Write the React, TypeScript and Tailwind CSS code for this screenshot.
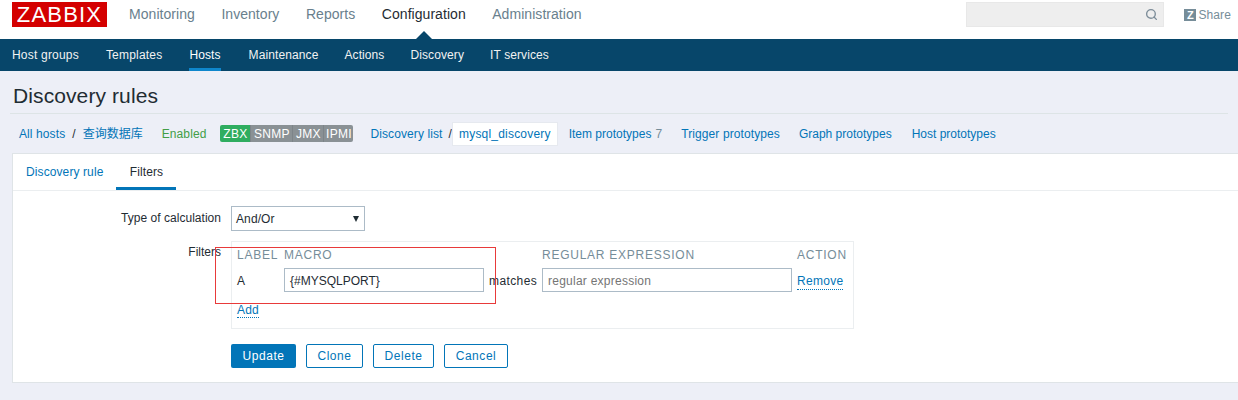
import React from "react";
import { Search } from "lucide-react";

const mainMenu = ["Monitoring", "Inventory", "Reports", "Configuration", "Administration"];
const subMenu = ["Host groups", "Templates", "Hosts", "Maintenance", "Actions", "Discovery", "IT services"];

const Th = ({ className, children }: { className: string; children: React.ReactNode }) => (
  <div className={`text-[12px] leading-[14px] tracking-[0.75px] text-[#768d99] ${className}`}>{children}</div>
);

const Btn = ({ children, className }: { children: React.ReactNode; className: string }) => (
  <button className={`h-[24px] rounded-[2px] border border-[#0275b8] bg-white text-[12px] tracking-[0.55px] text-[#0275b8] ${className}`}>
    {children}
  </button>
);

export default function App() {
  return (
    <div className="relative flex h-[400px] w-[1238px] flex-col overflow-hidden bg-[#edeff7] font-['Liberation_Sans','Noto_Sans_CJK_SC',sans-serif] text-[12px] text-[#1f2c33]">
      {/* top menu */}
      <div className="flex h-[39px] items-start bg-white">
        <div className="ml-[12px] mt-[2px] flex h-[25px] w-[95px] items-center justify-center bg-[#d40000] text-[22px] tracking-[1.2px] text-white">
          ZABBIX
        </div>
        <div className="ml-[22px] mt-[6px] flex gap-[26.5px] text-[14px] leading-[16px] tracking-[0.05px] text-[#69808d]">
          {mainMenu.map((m) => (
            <span key={m} className={m === "Configuration" ? "text-[#1f2c33]" : ""}>
              {m}
            </span>
          ))}
        </div>
        <div className="ml-auto mt-[2px] flex h-[25px] w-[198px] items-center justify-end border border-[#e8e8e8] bg-[#eeeeee] pr-[5px]">
          <Search size={13} strokeWidth={2.5} className="text-[#7d8d99]" />
        </div>
        <div className="ml-[20px] mr-[7px] mt-[8px] flex items-center gap-[2px] text-[12px] leading-[14px] tracking-[0.1px] text-[#768d99]">
          <span className="flex h-[12px] w-[12px] items-center justify-center bg-[#768d99] text-[11px] font-bold text-white">Z</span>
          Share
        </div>
      </div>

      {/* sub menu */}
      <div className="relative flex h-[32px] gap-[26px] bg-[#07466a] pl-[12px] text-[12px] text-[#f2f2f2]">
        <div className="absolute left-[416px] top-[-8px] h-0 w-0 border-x-[8px] border-b-[8px] border-x-transparent border-b-[#07466a]" />
        {subMenu.map((s, i) => (
          <div
            key={s}
            className={`flex h-[32px] items-center ${i < 2 ? "mr-[1px] tracking-[0.2px]" : "tracking-[0.1px]"} ${
              s === "Hosts" ? "mr-[2px] border-b-[3px] border-[#0e86cc] pt-[3px] text-white" : ""
            }`}
          >
            {s}
          </div>
        ))}
      </div>

      {/* title */}
      <div className="mx-[10px] flex h-[43px] items-center border-b border-[#dde4e6] pl-[3px] pt-[7px] text-[21px] font-normal tracking-[0.1px] text-[#1f2c33]">
        Discovery rules
      </div>

      {/* breadcrumb row */}
      <div className="flex h-[39px] items-center pl-[19px] tracking-[0.1px] text-[#0275b8]">
        <span>All hosts</span>
        <span className="mx-[7px] text-[#1f2c33]">/</span>
        <span className="tracking-normal">查询数据库</span>
        <span className="ml-[19px] text-[#429e47]">Enabled</span>
        <div className="ml-[14px] flex h-[17px] items-center overflow-hidden rounded-[2px] text-[12px] tracking-[0.3px] text-white">
          <span className="flex h-full w-[30px] items-center justify-center bg-[#2fad60]">ZBX</span>
          <span className="flex h-full w-[42px] items-center justify-center border-l border-[#7d8489] bg-[#8a9195]">SNMP</span>
          <span className="flex h-full w-[31px] items-center justify-center border-l border-[#7d8489] bg-[#8a9195]">JMX</span>
          <span className="flex h-full w-[30px] items-center justify-center border-l border-[#7d8489] bg-[#8a9195]">IPMI</span>
        </div>
        <span className="ml-[17px]">Discovery list</span>
        <span className="ml-[6px] text-[#1f2c33]">/</span>
        <span className="flex h-[24px] items-center border border-[#e6e9ef] bg-white px-[6px] tracking-[0.2px]">mysql_discovery</span>
        <span className="ml-[11px] tracking-normal">Item prototypes</span>
        <span className="ml-[4px] text-[#768d99]">7</span>
        <span className="ml-[19px]">Trigger prototypes</span>
        <span className="ml-[19px] tracking-normal">Graph prototypes</span>
        <span className="ml-[20px] tracking-normal">Host prototypes</span>
      </div>

      {/* panel */}
      <div className="ml-[12px] h-[230px] border border-r-0 border-[#dfe4e7] bg-white">
        <div className="flex h-[37px] items-stretch border-b border-[#ebeef0] tracking-[0.1px]">
          <div className="ml-[13px] flex items-center text-[#0275b8]">Discovery rule</div>
          <div className="ml-[13px] flex w-[60px] items-center justify-center border-b-[3px] border-[#0275b8] pt-[2px]">Filters</div>
        </div>

        <div className="mt-[15px] flex items-center">
          <div className="w-[208px] pb-[2px] text-right tracking-[0.03px]">Type of calculation</div>
          <div className="ml-[10px] flex h-[25px] w-[134px] items-center justify-between border border-[#acbbc7] pl-[4px] pr-[5px] tracking-[0.1px]">
            And/Or
            <span className="h-0 w-0 border-x-[3.5px] border-t-[6px] border-x-transparent border-t-[#1f2c33]" />
          </div>
        </div>

        <div className="mt-[10px] flex items-start">
          <div className="w-[208px] pt-[2px] text-right">Filters</div>
          <div className="ml-[10px] flex h-[88px] w-[623px] flex-col border border-[#ebeef0] px-[5px] pt-[6px]">
            <div className="flex">
              <Th className="w-[47px]">LABEL</Th>
              <Th className="w-[258px]">MACRO</Th>
              <Th className="w-[255px]">REGULAR EXPRESSION</Th>
              <Th className="">ACTION</Th>
            </div>
            <div className="mt-[6px] flex h-[24px] items-center">
              <span className="w-[47px] pt-[2px]">A</span>
              <div className="flex h-[24px] w-[200px] items-center border border-[#acbbc7] pl-[5px] pt-[1px]">{"{#MYSQLPORT}"}</div>
              <span className="ml-[5px] w-[53px] pt-[2px] tracking-[0.4px]">matches</span>
              <div className="flex h-[24px] w-[250px] items-center border border-[#acbbc7] pl-[5px] pt-[1px] tracking-[0.25px] text-[#757575]">regular expression</div>
              <span className="ml-[5px] mt-[3px] border-b border-dotted border-[#0275b8] leading-[15px] tracking-[0.3px] text-[#0275b8]">Remove</span>
            </div>
            <div className="mt-[9px]">
              <span className="border-b border-dotted border-[#0275b8] leading-[15px] tracking-[0.2px] text-[#0275b8]">Add</span>
            </div>
          </div>
        </div>

        <div className="ml-[218px] mt-[15px] flex gap-[10px]">
          <button className="h-[24px] w-[65px] rounded-[2px] bg-[#0275b8] text-[12px] tracking-[0.55px] text-white">Update</button>
          <Btn className="w-[57px]">Clone</Btn>
          <Btn className="w-[61px]">Delete</Btn>
          <Btn className="w-[64px]">Cancel</Btn>
        </div>
      </div>

      {/* red annotation box drawn over the form */}
      <div className="absolute left-[215px] top-[247px] h-[57px] w-[281px] border border-[#e83a3a]" />
    </div>
  );
}
